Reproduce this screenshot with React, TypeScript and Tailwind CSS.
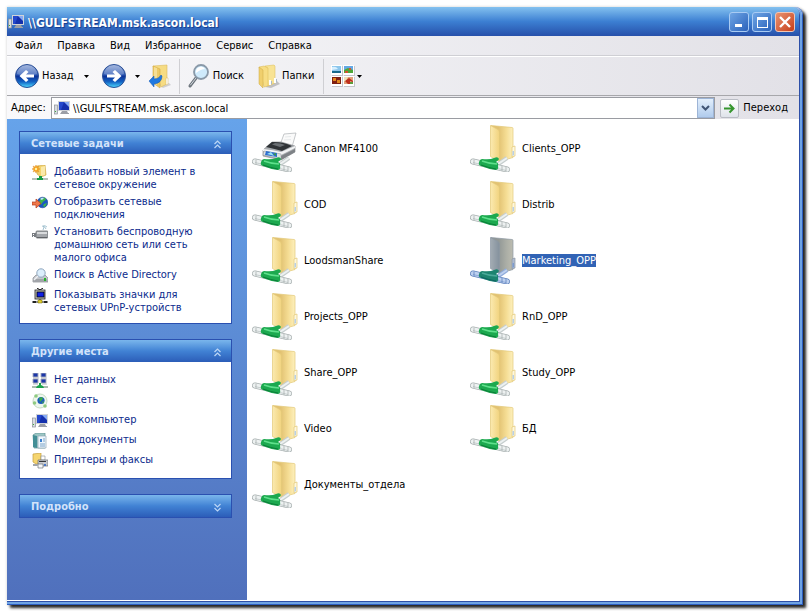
import type { ReactNode } from "react";

const FONT = "font-['DejaVu_Sans_Condensed','DejaVu_Sans',sans-serif]";

function ComputerIcon() {
  return (
    <svg width="16" height="16" viewBox="0 0 16 16" className="shrink-0" aria-hidden="true">
      <rect x="0.5" y="5" width="3" height="9" fill="#d9dce1" stroke="#8b9098" strokeWidth="0.7" />
      <rect x="1" y="11" width="1" height="1" fill="#3fae3a" />
      <path d="M4 1h12v10H4z" fill="#cfd2d7" />
      <path d="M5 2h10v8H5z" fill="#1430ad" />
      <path d="M5 2h5L7 10H5z" fill="#2448cc" />
      <path d="M10 2h5v5z" fill="#86aaf4" />
      <path d="M8 11h5l1 2h1v1H6z" fill="#9b9ea6" />
    </svg>
  );
}

function RoundArrow({ back }: { back?: boolean }) {
  return (
    <svg width="26" height="26" viewBox="0 0 26 26" className="shrink-0" aria-hidden="true">
      <defs>
        <linearGradient id={back ? "orbL" : "orbR"} x1="0" y1="0" x2="0" y2="1">
          <stop offset="0" stopColor="#8ea6d6" />
          <stop offset="0.46" stopColor="#2b57b4" />
          <stop offset="0.5" stopColor="#0b2f96" />
          <stop offset="0.75" stopColor="#1263c4" />
          <stop offset="1" stopColor="#4fdcff" />
        </linearGradient>
      </defs>
      <circle cx="13" cy="13" r="11.500" fill={back ? "url(#orbL)" : "url(#orbR)"} stroke="#2a4f97" strokeWidth="1" />
      <path d="M3 11a10 9 0 0 1 20 0q-10 3-20 0z" fill="#fff" opacity="0.22" />
      <path
        d={
          back
            ? "M5.500 13L12 7l2.500 2-2.500 2.500h8v3h-8l2.500 2.500-2.500 2z"
            : "M20.500 13L14 7l-2.500 2 2.500 2.500H6v3h8l-2.500 2.500 2.500 2z"
        }
        fill="#fff"
      />
    </svg>
  );
}

function Caret() {
  return (
    <svg width="5" height="3" viewBox="0 0 5 3" className="shrink-0" aria-hidden="true">
      <path d="M0 0h5L2.500 3z" fill="#000" />
    </svg>
  );
}

function UpFolderIcon() {
  return (
    <svg width="24" height="26" viewBox="0 0 24 26" aria-hidden="true">
      <path d="M12 23l9-3 2 2-8 3z" fill="#000" opacity="0.15" />
      <path d="M5 3l14-1v19l-6 3z" fill="#f6dc83" stroke="#dcbb60" strokeWidth="0.6" />
      <path d="M5 3l7 3v19l-7-5z" fill="#eecb66" stroke="#d5ad48" strokeWidth="0.6" />
      <path d="M6 4l3 1v17l-3-2z" fill="#fbedb4" opacity="0.6" />
      <path d="M18 15h2v6l-2 1z" fill="#fff" stroke="#d9bb62" strokeWidth="0.5" />
      <path d="M1 18l5-5v3q5 0 7-4l1 1q0 7-8 8v3z" fill="#2079e0" stroke="#0d55b5" strokeWidth="0.5" />
    </svg>
  );
}

function SearchIcon() {
  return (
    <svg width="24" height="26" viewBox="0 0 24 26" aria-hidden="true">
      <path d="M9 15L3 23" stroke="#6c747c" strokeWidth="3" strokeLinecap="round" />
      <path d="M9 15L3.500 22" stroke="#d5dae0" strokeWidth="1" strokeLinecap="round" />
      <circle cx="14" cy="9" r="7" fill="#cfeafb" stroke="#8a99a8" strokeWidth="1.800" />
      <path d="M9 8a5 5 0 0 1 9-2q-4 0-9 4z" fill="#fff" />
    </svg>
  );
}

function FoldersIcon() {
  return (
    <svg width="24" height="26" viewBox="0 0 24 26" aria-hidden="true">
      <path d="M9 24l12-6 3 3-9 4z" fill="#000" opacity="0.2" />
      <path d="M9 3l9-1 1 1v17l-7 3z" fill="#f8e394" stroke="#dfc264" strokeWidth="0.6" />
      <path d="M9 3l3 2v18l-3-2z" fill="#efcd68" />
      <path d="M3 4l5-1 4 2v18l-4 1z" fill="#f7dd84" stroke="#d9b856" strokeWidth="0.5" />
      <path d="M3 4l4 3v18l-4-4z" fill="#f0cf6d" stroke="#cfa844" strokeWidth="0.5" />
      <path d="M13 17h2v5h-2zM18 15h2v5h-2z" fill="#fff" />
      <path d="M15 18h1v3h-1zM20 16h1v3h-1z" fill="#a9b9c8" />
    </svg>
  );
}

function ViewsIcon() {
  return (
    <svg width="24" height="24" viewBox="0 0 24 24" aria-hidden="true">
      <path d="M1 2h11v10H1zM13 2h11v10H13zM1 13h11v10H1zM13 13h11v10H13z" fill="#9b9ea3" opacity="0.5" />
      <path d="M0 1h11v10H0zM12 1h11v10H12zM0 12h11v10H0zM12 12h11v10H12z" fill="#fff" />
      <path d="M1 2h9v5H1z" fill="#8cc6ec" />
      <path d="M1 7h9v2H1z" fill="#17698c" />
      <path d="M1 3q4-1 6 2L1 6z" fill="#d8f0ff" />
      <path d="M13 2h9v7h-9z" fill="#65a8e4" />
      <path d="M13 6l4-2 5 2v3h-9z" fill="#4ea738" />
      <path d="M14 7h3v2h-3zM18 4h2v2h-2z" fill="#d2562e" />
      <path d="M1 13h9v7H1z" fill="#7f1f12" />
      <path d="M2 14h3v3H2zM6 16h3v3H6z" fill="#e0861d" />
      <path d="M13 13h9v7h-9z" fill="#e2a079" />
      <path d="M13 13h4l-2 4h-2z" fill="#efe1b5" />
      <path d="M14 17l4-3 4 3v1l-3-1v3h-2z" fill="#be2d1b" />
      <path d="M19 18h3v2h-3z" fill="#5f9c3c" />
    </svg>
  );
}

function NetworkPipe({ selected }: { selected?: boolean }) {
  const rim = selected ? "#5f83bd" : "#a9b1b1";
  const glass = selected ? "#bdd0ef" : "#edf1f1";
  const shade = selected ? "#8fabda" : "#c6cece";
  return (
    <g>
      <path d="M27 41l10-7" stroke={shade} strokeWidth="4" />
      <path d="M28 40l9-6" stroke={glass} strokeWidth="2" />
      <path d="M3 37.500L37 45.500" stroke={rim} strokeWidth="6" strokeLinecap="round" />
      <path d="M3 37.500L37 45.500" stroke={glass} strokeWidth="4.600" strokeLinecap="round" />
      <path d="M3 38.500L36 46.500" stroke={shade} strokeWidth="1" />
      <path d="M4 35.500v4.500M32 42v5M36 43v5" stroke={rim} strokeWidth="0.8" />
      <path
        d="M12 35q8 1 12-1 4-2 5 1 0 1-3 3 3 1 2 4 1 3-2 4-8-1-15-4-3-1-2-4 1-3 3-3z"
        fill={selected ? "#1c8470" : "#1ca94f"}
      />
      <path d="M12 37q8 3 15 3" stroke={selected ? "#4ba99a" : "#5fe08c"} strokeWidth="1.600" fill="none" />
      <path d="M11 41q8 3 15 4" stroke={selected ? "#0d6460" : "#0a7d38"} strokeWidth="1" fill="none" />
    </g>
  );
}

function NetworkFolderIcon({ selected }: { selected?: boolean }) {
  const edge = selected ? "#8c98a3" : "#e3c878";
  return (
    <svg width="48" height="48" viewBox="0 0 48 48" className="shrink-0" aria-hidden="true">
      <defs>
        <linearGradient id={selected ? "flapS" : "flap"} x1="0" y1="0" x2="1" y2="0">
          <stop offset="0" stopColor={selected ? "#a3acb3" : "#fbeab0"} />
          <stop offset="1" stopColor={selected ? "#84919d" : "#f1d37e"} />
        </linearGradient>
        <linearGradient id={selected ? "bodyS" : "body"} x1="0" y1="0" x2="1" y2="0">
          <stop offset="0.35" stopColor={selected ? "#929896" : "#e2c272"} />
          <stop offset="0.7" stopColor={selected ? "#abaea6" : "#f5dd94"} />
          <stop offset="1" stopColor={selected ? "#bcbcb0" : "#fdf0bd"} />
        </linearGradient>
      </defs>
      <path d="M21 1.500l21 2q1 0 1 1v29l-14 4z" fill={selected ? "url(#bodyS)" : "url(#body)"} stroke={edge} strokeWidth="0.7" />
      <path
        d="M20.500 1.500l7.500 4q1.500 1 1.500 3v29l-9-5z"
        fill={selected ? "url(#flapS)" : "url(#flap)"}
        stroke={edge}
        strokeWidth="0.7"
      />
      <path d="M42 23l3-1v10l-3 1z" fill={selected ? "#aebbd0" : "#fff8dc"} stroke={edge} strokeWidth="0.7" />
      <path d="M42.500 27h1.500v4l-1.500 1z" fill={selected ? "#7d9cd0" : "#b9d0e4"} />
      <NetworkPipe selected={selected} />
    </svg>
  );
}

function NetworkPrinterIcon() {
  return (
    <svg width="48" height="48" viewBox="0 0 48 48" className="shrink-0" aria-hidden="true">
      <path d="M28 21l4-11 12-1-4 14z" fill="#fafafa" stroke="#aeb2b5" strokeWidth="0.7" />
      <path d="M33 13l6-.5M32 16l7-.4" stroke="#e0e3e5" strokeWidth="0.8" />
      <path d="M11 26l9-8 9 0 14 4v6l-14 8-18-4z" fill="#a9adb1" stroke="#7d8185" strokeWidth="0.6" />
      <path d="M14 23l6-5q11-.5 20 4l-10 5q-7-2-16-4z" fill="#2f3336" />
      <path d="M20 20.500l3-1.500q6 0 10 2l-5 2z" fill="#6a6f73" />
      <path d="M11 25q10 1 18 3v2l-18-3z" fill="#f5f6f7" />
      <path d="M29 28l14-6v2l-14 7z" fill="#f1f2f3" />
      <path d="M29 32l14-7v3l-14 8z" fill="#7e8286" />
      <path d="M12 27l17 3v5l-18-4z" fill="#dfe2e5" stroke="#989da1" strokeWidth="0.5" />
      <path d="M14 27l11 2v4l-12-2z" fill="#2e70cf" />
      <path d="M15 30l4-2 3 4-3-1z" fill="#9ce0f3" />
      <path d="M21 30l3-1v3z" fill="#3a9a4b" />
      <NetworkPipe />
    </svg>
  );
}

function AddPlaceIcon() {
  return (
    <svg width="16" height="16" viewBox="0 0 16 16" aria-hidden="true">
      <path d="M5 1l8-1 1 10-5 2-4-3z" fill="#f3d36c" stroke="#d0aa4b" strokeWidth="0.7" />
      <path d="M9 2l4-1v9l-4 1z" fill="#fae9a9" />
      <path d="M4 0l1 2 2-1-1 2 2 1-2 1 1 2-2-1-1 2-1-2-2 1 1-2-2-1 2-1-1-2 2 1z" fill="#f9a420" stroke="#d98a23" strokeWidth="0.4" />
      <circle cx="4" cy="4" r="1.200" fill="#fff2a0" />
      <path d="M0 13h16v2H0z" fill="#b5c1b8" />
      <path d="M5 13h6v2H5zM7 11h3v3H7z" fill="#169b45" />
    </svg>
  );
}

function ConnectionsIcon() {
  return (
    <svg width="16" height="16" viewBox="0 0 16 16" aria-hidden="true">
      <circle cx="10.500" cy="7.500" r="5.300" fill="#1a56c4" stroke="#123c86" strokeWidth="0.5" />
      <path d="M9 3l4-.3 1 2-3 2-2 3-2-3zM12 9l3-1-2 4-2-1z" fill="#3fb34c" />
      <path d="M8 4q2-2 4-1L10 5z" fill="#bfe5ff" />
      <path d="M0 7h4V4l5 4.500L4 13v-3H0z" fill="#f0784a" stroke="#b3391b" strokeWidth="0.7" />
    </svg>
  );
}

function WirelessIcon() {
  return (
    <svg width="16" height="16" viewBox="0 0 16 16" aria-hidden="true">
      <path d="M11 5l1-3M14 4q-1-3-4-3M15 2q-2-2-4-1" stroke="#8fb5c6" strokeWidth="0.8" fill="none" />
      <rect x="4" y="6" width="12" height="7" rx="1" fill="#a4a7ab" stroke="#6b6e72" strokeWidth="0.8" />
      <path d="M5 7h10v2H5z" fill="#d9dbdd" />
      <path d="M0 8h4v4H0z" fill="#787c81" />
      <path d="M1 9h1v1H1zM1 11h1v1H1z" fill="#fff" />
      <path d="M5 12h10v1H5z" fill="#616468" />
    </svg>
  );
}

function DirectoryIcon() {
  return (
    <svg width="16" height="16" viewBox="0 0 16 16" aria-hidden="true">
      <path d="M1 10l3-3h9l3 3v4H1z" fill="#c2c5ca" stroke="#85888e" strokeWidth="0.7" />
      <path d="M1 11h14v3H1z" fill="#a1a4a9" />
      <circle cx="9" cy="5" r="4.200" fill="#dceefc" stroke="#8fa6bd" strokeWidth="1" />
      <path d="M6 8l-4 4" stroke="#eef0f3" strokeWidth="1.500" />
      <rect x="12" y="10" width="2" height="3" fill="#25b62c" />
    </svg>
  );
}

function UpnpIcon() {
  return (
    <svg width="16" height="16" viewBox="0 0 16 16" aria-hidden="true">
      <path d="M5 0l3 2 3-2" stroke="#000" fill="none" />
      <rect x="3" y="2" width="10" height="9" fill="#c5c5bd" stroke="#222" strokeWidth="0.8" />
      <rect x="5" y="4" width="7" height="5" fill="#1020e4" stroke="#000" strokeWidth="0.8" />
      <path d="M0 14h16M8 11v3" stroke="#222" />
      <path d="M6 12h4v3H6z" fill="#e5d232" stroke="#6d6500" strokeWidth="0.5" />
      <path d="M1 13h3v2H1zM12 13h3v2h-3z" fill="#222" />
    </svg>
  );
}

function WorkgroupIcon() {
  return (
    <svg width="16" height="16" viewBox="0 0 16 16" aria-hidden="true">
      <path d="M1 0h5v4H1zM9 0h5v4H9zM1 6h5v4H1zM9 6h5v4H9z" fill="#1c37a8" stroke="#a7acba" strokeWidth="0.9" />
      <path d="M1 5h6M9 5h6M1 11h5M10 11h5" stroke="#b4b8c0" />
      <path d="M0 13h16v2H0z" fill="#a8bbae" />
      <path d="M4 15l1-2 2-1v-2h2v2l2 1 1 2z" fill="#19a44a" />
    </svg>
  );
}

function WholeNetworkIcon() {
  return (
    <svg width="16" height="16" viewBox="0 0 16 16" aria-hidden="true">
      <circle cx="8" cy="8" r="7" fill="#eef6ed" stroke="#c5dcc3" />
      <circle cx="9" cy="7.500" r="3.600" fill="#1c5dba" />
      <path d="M7 5l3-1 1 2-3 3zM10 9l2-1-1 3z" fill="#3da94b" />
      <circle cx="4" cy="3" r="1.800" fill="#8fca82" />
      <circle cx="2.500" cy="10" r="1.800" fill="#8fca82" />
      <circle cx="13" cy="13" r="1.800" fill="#8fca82" />
    </svg>
  );
}

function DocumentsIcon() {
  return (
    <svg width="16" height="16" viewBox="0 0 16 16" aria-hidden="true">
      <path d="M1 2l3-2h9v15H2z" fill="#9cc6c4" stroke="#5e9094" strokeWidth="0.7" />
      <path d="M1 2l4 1v12l-4-1z" fill="#438f96" />
      <path d="M6 3h8v12H6z" fill="#eef6fc" stroke="#8fa7b6" strokeWidth="0.7" />
      <path d="M8 6h2v3H8z" fill="#3b7fd0" />
      <path d="M11 6h2M11 8h2M8 11h5M8 13h5" stroke="#7da4c8" />
    </svg>
  );
}

function PrintersIcon() {
  return (
    <svg width="16" height="16" viewBox="0 0 16 16" aria-hidden="true">
      <path d="M1 1l8-1v10l-5 1-3-2z" fill="#f5d56f" stroke="#c49d3c" strokeWidth="0.7" />
      <path d="M9 3h4v4H9z" fill="#fff" stroke="#85898e" strokeWidth="0.6" />
      <path d="M6 7h10v6H6z" fill="#c9ccd1" stroke="#6b6e73" strokeWidth="0.7" />
      <path d="M7 8h7v1H7z" fill="#35383c" />
      <path d="M6 11h5v4H6z" fill="#f6f8fa" stroke="#5b6065" strokeWidth="0.6" />
      <path d="M12 11h2v2h-2z" fill="#4878ca" />
      <path d="M1 11h4v2H1z" fill="#a1a5aa" />
    </svg>
  );
}

function Chevrons({ down }: { down?: boolean }) {
  return (
    <svg width="9" height="9" viewBox="0 0 9 9" aria-hidden="true">
      <path
        d={down ? "M1.500 1l3 3 3-3M1.500 5l3 3 3-3" : "M1.500 4l3-3 3 3M1.500 8l3-3 3 3"}
        stroke="#bcd6f6"
        strokeWidth="1.200"
        fill="none"
      />
    </svg>
  );
}

type Task = { icon: ReactNode; lines: string[] };

const networkTasks: Task[] = [
  { icon: <AddPlaceIcon />, lines: ["Добавить новый элемент в", "сетевое окружение"] },
  { icon: <ConnectionsIcon />, lines: ["Отобразить сетевые", "подключения"] },
  { icon: <WirelessIcon />, lines: ["Установить беспроводную", "домашнюю сеть или сеть", "малого офиса"] },
  { icon: <DirectoryIcon />, lines: ["Поиск в Active Directory"] },
  { icon: <UpnpIcon />, lines: ["Показывать значки для", "сетевых UPnP-устройств"] },
];

const otherPlaces: Task[] = [
  { icon: <WorkgroupIcon />, lines: ["Нет данных"] },
  { icon: <WholeNetworkIcon />, lines: ["Вся сеть"] },
  { icon: <ComputerIcon />, lines: ["Мой компьютер"] },
  { icon: <DocumentsIcon />, lines: ["Мои документы"] },
  { icon: <PrintersIcon />, lines: ["Принтеры и факсы"] },
];

const shares = [
  "Canon MF4100",
  "Clients_OPP",
  "COD",
  "Distrib",
  "LoodsmanShare",
  "Marketing_OPP",
  "Projects_OPP",
  "RnD_OPP",
  "Share_OPP",
  "Study_OPP",
  "Video",
  "БД",
  "Документы_отдела",
];

function TaskPanel({ title, items }: { title: string; items?: Task[] }) {
  return (
    <section className="border border-[#2a50b0] bg-white">
      <h2>
        <button
          type="button"
          aria-expanded={!!items}
          className="flex h-[22px] w-full items-center justify-between bg-linear-to-b from-[#7ab6ec] via-[#4182d4] to-[#2c5db8] pt-[2px] pr-[9px] pl-[11px] text-[11px] font-bold text-[#d3e3fa]"
        >
          {title}
          <Chevrons down={!items} />
        </button>
      </h2>
      {items && (
        <ul className="flex flex-col gap-1 px-3 pt-[11px] pb-[9px]">
          {items.map((item) => (
            <li key={item.lines[0]}>
              <a href="#" className="flex min-h-4 items-start gap-1.5 text-[11px] leading-[13px] text-[#0a2a8c]">
                <span className="h-4 w-4 shrink-0">{item.icon}</span>
                <span className="whitespace-nowrap">
                  {item.lines.map((line) => (
                    <span key={line} className="block">
                      {line}
                    </span>
                  ))}
                </span>
              </a>
            </li>
          ))}
        </ul>
      )}
    </section>
  );
}

function TitleBar() {
  const button =
    "flex h-5 w-5 items-center justify-center rounded-[3px] border border-[#a9cbf3] bg-linear-to-br from-[#6fa5e4] to-[#2b62bb]";
  return (
    <header className="flex h-[29px] shrink-0 items-center gap-1 rounded-tr-md bg-linear-to-b from-[#84c1ef] via-[#3c7fd2] to-[#2750aa] pr-1 pl-px">
      <ComputerIcon />
      <h1 className="flex-1 pt-[2px] text-[12px] font-bold whitespace-nowrap text-white [text-shadow:1px_1px_1px_#12398c]">
        {"\\\\GULFSTREAM.msk.ascon.local"}
      </h1>
      <div className="flex gap-[3px] pt-px">
        <button type="button" aria-label="Свернуть" className={button}>
          <svg width="14" height="14" viewBox="0 0 14 14">
            <path d="M3 9h7v3H3z" fill="#fff" />
          </svg>
        </button>
        <button type="button" aria-label="Развернуть" className={button}>
          <svg width="14" height="14" viewBox="0 0 14 14">
            <path d="M2 2h11v11H2zM3 5v7h9V5z" fill="#fff" fillRule="evenodd" />
          </svg>
        </button>
        <button
          type="button"
          aria-label="Закрыть"
          className="flex h-5 w-5 items-center justify-center rounded-[3px] border border-[#f3c5b3] bg-linear-to-br from-[#e8926f] to-[#c63b14]"
        >
          <svg width="14" height="14" viewBox="0 0 14 14">
            <path d="M2 2l10 10M12 2L2 12" stroke="#fff" strokeWidth="2.400" />
          </svg>
        </button>
      </div>
    </header>
  );
}

function Toolbar() {
  return (
    <div className="flex h-10 shrink-0 items-center border-t border-b border-t-white border-b-[#a7a7ab] pl-[7px]">
      <button type="button" className="flex items-center gap-[2px]">
        <RoundArrow back />
        <span className="pt-px">Назад</span>
      </button>
      <button type="button" aria-label="История назад" className="ml-[10px]">
        <Caret />
      </button>
      <button type="button" aria-label="Вперёд" className="ml-3">
        <RoundArrow />
      </button>
      <button type="button" aria-label="История вперёд" className="ml-2">
        <Caret />
      </button>
      <button type="button" aria-label="Вверх" className="ml-2">
        <UpFolderIcon />
      </button>
      <span className="mx-[7px] h-[35px] w-px bg-[#cfcfd3]" />
      <button type="button" className="flex items-center gap-[2px]">
        <SearchIcon />
        <span className="pt-px">Поиск</span>
      </button>
      <button type="button" className="ml-3 flex items-center gap-[2px]">
        <FoldersIcon />
        <span className="pt-px">Папки</span>
      </button>
      <span className="mr-[7px] ml-[9px] h-[35px] w-px bg-[#cfcfd3]" />
      <button type="button" aria-label="Вид" className="flex items-center gap-[2px]">
        <ViewsIcon />
        <Caret />
      </button>
    </div>
  );
}

function AddressBar() {
  return (
    <form className="flex h-[23px] shrink-0 items-stretch pt-px pl-1">
      <label htmlFor="address" className="flex w-10 items-center pt-px">
        Адрес:
      </label>
      <div className="flex flex-1 items-center border border-[#9a9ca2] bg-white pl-[2px]">
        <ComputerIcon />
        <input
          id="address"
          defaultValue={"\\\\GULFSTREAM.msk.ascon.local"}
          className="ml-[3px] h-full min-w-0 flex-1 bg-transparent pt-px outline-none"
        />
        <button
          type="button"
          aria-label="Показать список"
          className="flex h-5 w-[17px] items-center justify-center border border-[#9db4d6] bg-linear-to-b from-[#e3effc] to-[#b0cbec]"
        >
          <svg width="9" height="7" viewBox="0 0 9 7">
            <path d="M1 1l3.500 3.500L8 1" stroke="#405575" strokeWidth="2" fill="none" />
          </svg>
        </button>
      </div>
      <button type="button" className="ml-[5px] flex items-center gap-1 pr-[11px]">
        <span className="flex h-[19px] w-[19px] items-center justify-center rounded-[2px] border border-[#b9bcc4] bg-linear-to-b from-white to-[#dfe3ea]">
          <svg width="13" height="13" viewBox="0 0 13 13" aria-hidden="true">
            <path d="M1 6.500h9M6.500 2.500l4 4-4 4" stroke="#36962e" strokeWidth="2" fill="none" />
          </svg>
        </span>
        <span className="pt-px">Переход</span>
      </button>
    </form>
  );
}

export default function App() {
  return (
    <div className={`flex min-h-screen flex-col bg-white p-[7px] text-[11px] text-black ${FONT}`}>
      <div className="flex flex-1 flex-col rounded-tr-lg bg-[#ececf0] shadow-[3px_3px_3px_rgba(0,0,0,0.85),0_0_3px_rgba(0,0,0,0.2)]">
        <div className="flex flex-1 flex-col rounded-tr-lg border-r border-b border-[#2d5ec0]">
          <div className="flex flex-1 flex-col rounded-tr-lg border-r-2 border-b-2 border-[#6ea3e4]">
            <div className="flex flex-1 flex-col rounded-tr-lg border-r border-b border-[#2d4fa8] bg-linear-to-r from-[#f9f9fb] to-[#e2e1e7]">
              <TitleBar />
              <nav className="flex h-5 shrink-0 items-center gap-[15px] border-b border-[#cfcfd4] pt-[2px] pl-2">
                {["Файл", "Правка", "Вид", "Избранное", "Сервис", "Справка"].map((name) => (
                  <button key={name} type="button">
                    {name}
                  </button>
                ))}
              </nav>
              <Toolbar />
              <AddressBar />
              <div className="flex flex-1 bg-white pb-px">
                <aside className="flex w-[240px] shrink-0 flex-col gap-[15px] bg-linear-to-b from-[#66a3ea] to-[#5070bc] pt-3 pr-[15px] pl-3">
                  <TaskPanel title="Сетевые задачи" items={networkTasks} />
                  <TaskPanel title="Другие места" items={otherPlaces} />
                  <TaskPanel title="Подробно" />
                </aside>
                <main className="flex-1 pt-px pl-[5px]">
                  <ul className="grid grid-cols-[repeat(auto-fill,218px)]">
                    {shares.map((name, index) => {
                      const selected = name === "Marketing_OPP";
                      return (
                        <li key={name} className="h-14">
                          <button type="button" aria-pressed={selected} className="flex h-14 items-center gap-1 whitespace-nowrap">
                            {index === 0 ? <NetworkPrinterIcon /> : <NetworkFolderIcon selected={selected} />}
                            <span className={selected ? "bg-[#3163b5] leading-[13px] text-white" : "leading-[13px]"}>
                              {name}
                            </span>
                          </button>
                        </li>
                      );
                    })}
                  </ul>
                </main>
              </div>
            </div>
          </div>
        </div>
      </div>
    </div>
  );
}
